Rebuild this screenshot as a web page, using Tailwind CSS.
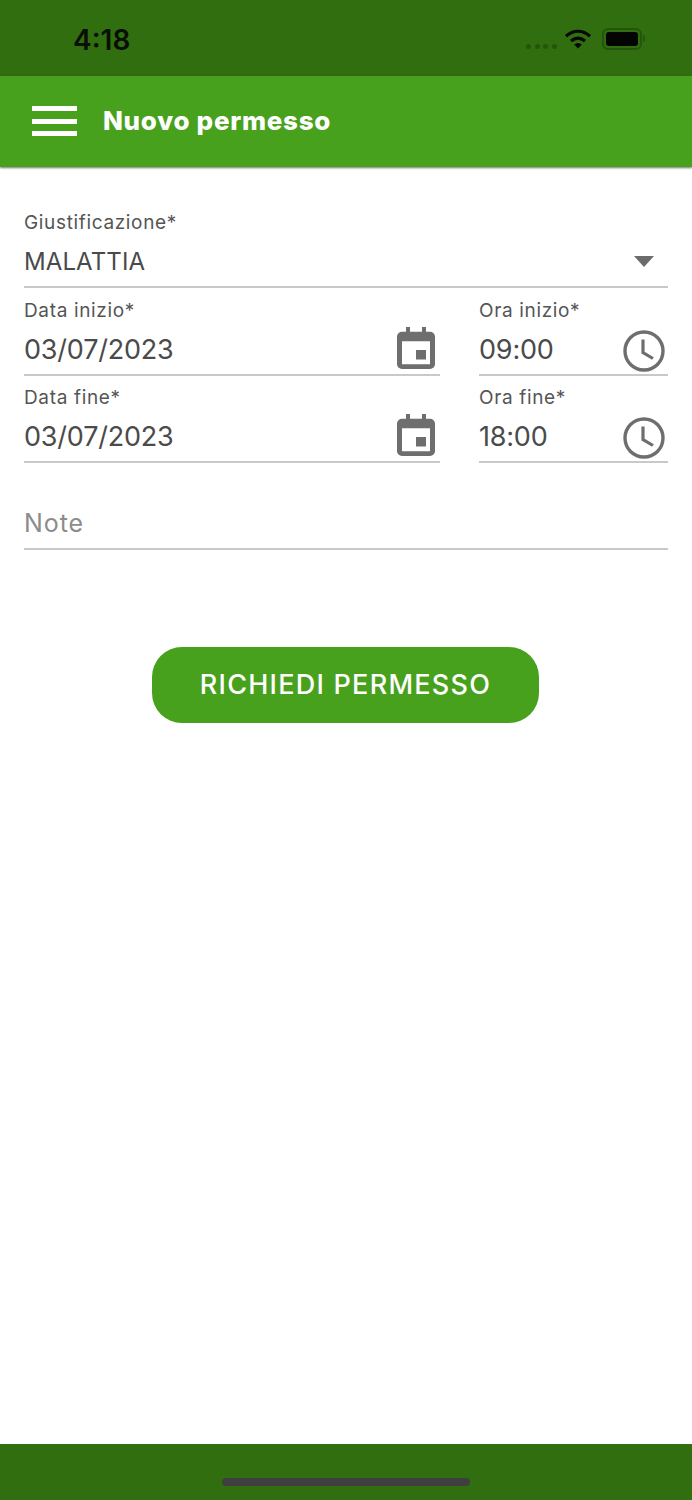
<!DOCTYPE html>
<html lang="it">
	<head>
		<meta charset="UTF-8" />
		<meta name="viewport" content="width=device-width, initial-scale=1.0" />
		<title>Nuovo permesso</title>
		<script src="https://cdn.jsdelivr.net/npm/@tailwindcss/browser@4"></script>
	</head>
	<body class="bg-white h-[1500px] w-[692px] flex flex-col overflow-hidden font-['Inter',sans-serif]">
		<!-- status bar -->
		<div class="h-[76px] bg-[#316e10] flex items-center justify-between shrink-0">
			<span class="ml-[73px] mt-[3px] text-[28px] font-semibold text-[#0a0f05]">4:18</span>
			<div class="flex items-center mr-[50px]">
				<div class="flex gap-[3.7px] mt-[16px] mr-[7px]">
					<span class="w-[5px] h-[5px] rounded-full bg-[#23560c]"></span>
					<span class="w-[5px] h-[5px] rounded-full bg-[#23560c]"></span>
					<span class="w-[5px] h-[5px] rounded-full bg-[#23560c]"></span>
					<span class="w-[5px] h-[5px] rounded-full bg-[#23560c]"></span>
				</div>
				<svg width="28" height="21" viewBox="0 0 28 21" class="mt-[1px]">
					<path d="M2 8.2 C9.5 1.6 18.5 1.6 26 8.2" fill="none" stroke="#050805" stroke-width="3.2"/>
					<path d="M7 13 C11.5 9.2 16.5 9.2 21 13" fill="none" stroke="#050805" stroke-width="3.2"/>
					<path d="M10.2 16.4 C12.6 14.4 15.4 14.4 17.8 16.4 L14 20.5 Z" fill="#050805"/>
				</svg>
				<div class="relative ml-[10px] mt-[1px] w-[40px] h-[22px] rounded-[6px] border-2 border-[#23560c] p-[2px]">
					<div class="w-full h-full rounded-[3px] bg-[#030503]"></div>
					<span class="absolute -right-[5px] top-[5px] w-[2px] h-[7px] rounded-r-sm bg-[#23560c]"></span>
				</div>
			</div>
		</div>

		<!-- app bar -->
		<header class="h-[91px] bg-[#48a11c] flex items-center shrink-0 shadow-[0_1px_2px_rgba(0,0,0,0.55)] relative">
			<div class="ml-[32px] w-[45px] flex flex-col gap-[7.5px] -mt-[1px]">
				<span class="h-[5px] bg-white"></span>
				<span class="h-[5px] bg-white"></span>
				<span class="h-[5px] bg-white"></span>
			</div>
			<h1 class="ml-[26px] -mt-[2px] text-[26px] font-extrabold text-white tracking-[0.7px]">Nuovo permesso</h1>
		</header>

		<!-- form -->
		<main class="flex-1 px-[24px] pt-[33px]">
			<div class="h-[88px] border-b-2 border-[#c9c9c9] flex flex-col">
				<label class="text-[19px] leading-[24px] mt-[11px] text-[#555555] tracking-[0.65px]">Giustificazione*</label>
				<div class="flex items-center justify-between mt-[10px]">
					<span class="text-[24px] leading-[34px] text-[#4a4a4a] tracking-[0.1px]">MALATTIA</span>
					<svg width="20" height="11" viewBox="0 0 20 11" class="mr-[14px] -mt-[2px]"><path d="M0 0H20L10 11Z" fill="#6b6b6b"/></svg>
				</div>
			</div>

			<div class="flex gap-[39px]">
				<div class="w-[416px] h-[88px] border-b-2 border-[#c9c9c9] flex flex-col">
					<label class="text-[19px] leading-[24px] mt-[11px] text-[#555555] tracking-[0.65px]">Data inizio*</label>
					<div class="flex items-center justify-between mt-[5px] h-[39px]">
						<span class="mt-[4px] text-[27px] leading-[34px] text-[#4a4a4a] -tracking-[0.2px]">03/07/2023</span>
						<svg width="38" height="42" viewBox="0 0 38 44" preserveAspectRatio="none" class="mr-[5px]">
							<path d="M9 0h4v5h12V0h4v5h4a5 5 0 0 1 5 5v29a5 5 0 0 1-5 5H5a5 5 0 0 1-5-5V10a5 5 0 0 1 5-5h4ZM5 15v24h28V15ZM19 24h10v10H19Z" fill="#6e6e6e" fill-rule="evenodd"/>
						</svg>
					</div>
				</div>
				<div class="w-[189px] h-[88px] border-b-2 border-[#c9c9c9] flex flex-col">
					<label class="text-[19px] leading-[24px] mt-[11px] text-[#555555] tracking-[0.65px]">Ora inizio*</label>
					<div class="flex items-center justify-between mt-[5px] h-[39px]">
						<span class="mt-[4px] text-[27px] leading-[34px] text-[#4a4a4a] -tracking-[0.2px]">09:00</span>
						<svg width="42" height="42" viewBox="0 0 42 42" class="mr-[3px] mt-[7px]">
							<circle cx="21" cy="21" r="19" fill="none" stroke="#6e6e6e" stroke-width="3.4"/>
							<path d="M20 9.5V22.5L30 28.5" fill="none" stroke="#6e6e6e" stroke-width="3.2"/>
						</svg>
					</div>
				</div>
			</div>

			<div class="flex gap-[39px]">
				<div class="w-[416px] h-[87px] border-b-2 border-[#c9c9c9] flex flex-col">
					<label class="text-[19px] leading-[24px] mt-[10px] text-[#555555] tracking-[0.65px]">Data fine*</label>
					<div class="flex items-center justify-between mt-[5px] h-[39px]">
						<span class="mt-[4px] text-[27px] leading-[34px] text-[#4a4a4a] -tracking-[0.2px]">03/07/2023</span>
						<svg width="38" height="42" viewBox="0 0 38 44" preserveAspectRatio="none" class="mr-[5px]">
							<path d="M9 0h4v5h12V0h4v5h4a5 5 0 0 1 5 5v29a5 5 0 0 1-5 5H5a5 5 0 0 1-5-5V10a5 5 0 0 1 5-5h4ZM5 15v24h28V15ZM19 24h10v10H19Z" fill="#6e6e6e" fill-rule="evenodd"/>
						</svg>
					</div>
				</div>
				<div class="w-[189px] h-[87px] border-b-2 border-[#c9c9c9] flex flex-col">
					<label class="text-[19px] leading-[24px] mt-[10px] text-[#555555] tracking-[0.65px]">Ora fine*</label>
					<div class="flex items-center justify-between mt-[5px] h-[39px]">
						<span class="mt-[4px] text-[27px] leading-[34px] text-[#4a4a4a] -tracking-[0.2px]">18:00</span>
						<svg width="42" height="42" viewBox="0 0 42 42" class="mr-[3px] mt-[7px]">
							<circle cx="21" cy="21" r="19" fill="none" stroke="#6e6e6e" stroke-width="3.4"/>
							<path d="M20 9.5V22.5L30 28.5" fill="none" stroke="#6e6e6e" stroke-width="3.2"/>
						</svg>
					</div>
				</div>
			</div>

			<div class="h-[87px] border-b-2 border-[#c9c9c9] flex items-end">
				<span class="text-[25px] leading-[34px] mb-[8px] text-[#8c8c8c] tracking-[0.9px]">Note</span>
			</div>

			<button class="block ml-[128px] mt-[97px] w-[387px] h-[76px] rounded-[30px] bg-[#48a11c] text-white text-[27px] font-medium tracking-[1.25px]">RICHIEDI PERMESSO</button>
		</main>

		<!-- home indicator -->
		<div class="h-[56px] bg-[#316e10] shrink-0 flex justify-center">
			<span class="mt-[34px] w-[248px] h-[8px] rounded-full bg-[#3f3f3f]"></span>
		</div>
	</body>
</html>
